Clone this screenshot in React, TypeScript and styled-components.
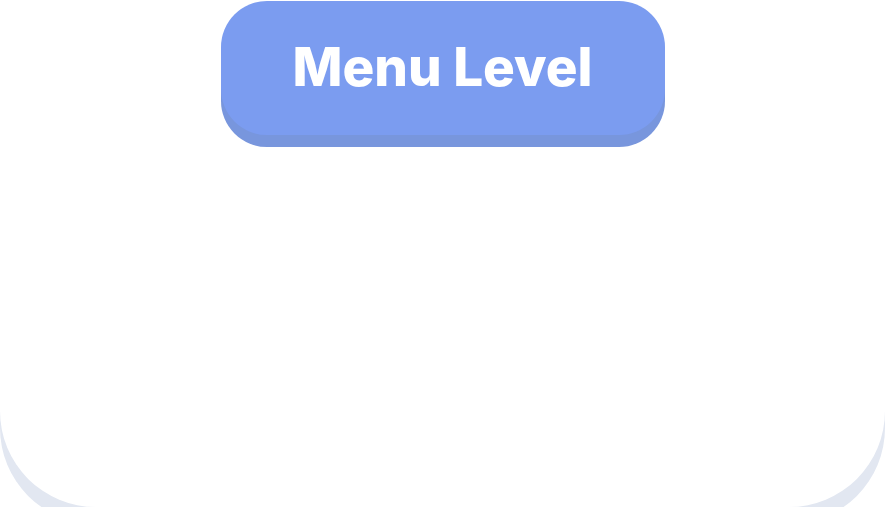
import styled, { createGlobalStyle } from "styled-components";

const GlobalStyle = createGlobalStyle`
  html, body {
    margin: 0;
    padding: 0;
    background-color: #ffffff;
  }
`;

const Card = styled.section`
  display: flex;
  flex-direction: column;
  align-items: center;
  height: 507px;
  padding-top: 1px;
  box-sizing: border-box;
  background-color: #ffffff;
  border-radius: 0 0 96px 96px;
  box-shadow: 0 17px 0 0 #e2e7f1;
`;

const LevelButton = styled.button`
  display: flex;
  align-items: center;
  justify-content: center;
  width: 444px;
  height: 134px;
  padding: 0 0 2px;
  border: none;
  border-radius: 46px;
  background-color: #7b9cf0;
  box-shadow: 0 12px 0 0 #7896dd;
  color: #ffffff;
  font-family: Inter, "Noto Sans", sans-serif;
  font-weight: 800;
  font-size: 53px;
  letter-spacing: 0;
  cursor: pointer;
`;

const App = () => {
  return (
    <>
      <GlobalStyle />
      <Card>
        <LevelButton>Menu Level</LevelButton>
      </Card>
    </>
  );
};

export default App;
